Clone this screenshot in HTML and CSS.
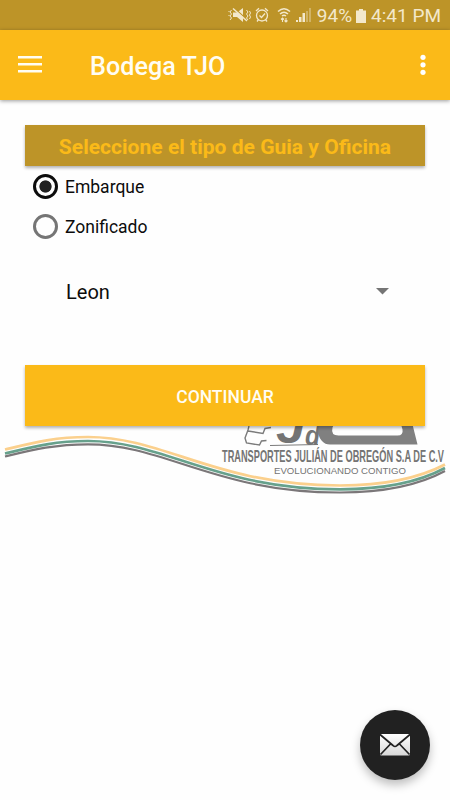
FILE: index.html
```html
<!DOCTYPE html>
<html lang="es">
<head>
<meta charset="utf-8">
<title>Bodega TJO</title>
<link rel="stylesheet" href="styles.css">
</head>
<body>
<div class="status">
  <svg class="status-icons" width="86" height="30" viewBox="0 0 86 30" fill="none" stroke="#f3e8cb" stroke-width="1.3">
    <path d="M5 12.500h4l6-4.500v14l-6-5H5z" fill="#f3e8cb" stroke="none"/>
    <path d="M6 8l14 12.500" stroke="#bd9428" stroke-width="1.500"/>
    <path d="M5 8.500l14 12.500" stroke-width="1.500"/>
    <path d="M3.500 10L2 12l1.500 2L2 16l1.500 2L2 20M1 11v1M1 15v1M18.500 10l1.500 2-1.500 2 1.500 2-1.500 2 1.500 2M21.500 11l1 2-1 2 1 2-1 2" stroke-width="1"/>
    <circle cx="34" cy="15.500" r="5.500"/>
    <path d="M28 11l3-2.700M40 11l-3-2.700M30.500 19.500L29 21.500M37.500 19.500l1.500 2M31.500 15.500l2 2 3.500-4"/>
    <path d="M50 11.500q6-5.500 12 0M52 14q4-3.600 8 0M54 16q2-1.500 4 0" stroke-width="1.500"/>
    <path d="M54.500 22v-4M53 19.500l1.500-1.500 1.500 1.500M58 18v4M56.500 20.500L58 22l1.500-1.500" stroke-width="1.100"/>
    <path d="M68 22v-2h2v2zM71 22v-5h2.500v5zM74.500 22v-9h2.500v9z" fill="#f3e8cb" stroke="none"/>
    <path d="M78 22V11h2v11zM81 22V8h2v14z" fill="#f3e8cb" opacity=".38" stroke="none"/>
  </svg>
  <span class="percent">94%</span>
  <svg class="battery" width="10" height="30" viewBox="0 0 10 30"><path d="M3 8h4v1.500h3V22H0V9.500h3z" fill="#f3e8cb"/></svg>
  <span class="clock">4:41 PM</span>
</div>
<header class="bar">
  <svg class="menu" width="24" height="17" viewBox="0 0 24 17" fill="#fffdf3"><path d="M0 0h24v2.600H0zM0 7h24v2.600H0zM0 14h24v2.600H0z"/></svg>
  <h1>Bodega TJO</h1>
  <svg class="more" width="6" height="22" viewBox="0 0 6 22" fill="#fff"><circle cx="3" cy="3.300" r="2.600"/><circle cx="3" cy="10.800" r="2.600"/><circle cx="3" cy="18.300" r="2.600"/></svg>
</header>
<main>
  <svg class="brand" width="450" height="90" viewBox="0 410 450 90">
    <g fill="none" stroke-width="2.700">
      <path d="M5 449.500C32 443 54 437 88 437C165 437 215 485.500 340 485.500C388 485.500 421 477 445 464.500" stroke="#fbd08d"/>
      <path d="M5 453.500C32 447 54 441 88 441C165 441 215 489.300 340 489.300C388 489.300 421 481 445 468" stroke="#67a18c"/>
      <path d="M5 456.500C32 450 54 444.300 88 444.300C165 444.300 215 492.500 340 492.500C388 492.500 421 484 445 471" stroke="#7b7779" stroke-width="2.200"/>
    </g>
    <path d="M249 426l-1 4-3 8 1.500 5 13 2 2-4 5-.5M248 431l15 2.500 2-5 6-1" fill="none" stroke="#7b7b7b" stroke-width="1.400"/>
    <path d="M270 445.500l48-1" stroke="#7b7b7b" stroke-width="1"/>
    <text class="brand-j" x="276" y="443" textLength="29" lengthAdjust="spacingAndGlyphs">J</text>
    <text class="brand-d" x="305" y="444.500" textLength="15" lengthAdjust="spacingAndGlyphs">d</text>
    <path d="M321 415q-6 19 1 26 3 3.500 8 3.500h87.500l-6-24-13-5 4 14q1 6-5 6h-59q-8 0-6-8l5-12z" fill="#808080"/>
    <text class="brand-name" x="222" y="461.500" textLength="222" lengthAdjust="spacingAndGlyphs">TRANSPORTES JULIÁN DE OBREGÓN S.A DE C.V</text>
    <text class="brand-tag" x="274" y="473.500" textLength="132" lengthAdjust="spacingAndGlyphs">EVOLUCIONANDO CONTIGO</text>
  </svg>
  <h2>Seleccione el tipo de Guia y Oficina</h2>
  <div class="choice"><span class="radio on"></span><span class="label">Embarque</span></div>
  <div class="choice"><span class="radio"></span><span class="label">Zonificado</span></div>
  <div class="select"><span class="label">Leon</span><svg width="13" height="7" viewBox="0 0 13 7"><path d="M0 0h13L6.500 6.500z" fill="#757575"/></svg></div>
  <button>CONTINUAR</button>
</main>
<div class="fab">
  <svg width="32" height="24" viewBox="0 0 32 24">
    <defs><linearGradient id="paper" x2="0" y2="1"><stop stop-color="#fff"/><stop offset="1" stop-color="#d8d8d8"/></linearGradient></defs>
    <rect x="1" y="1" width="30" height="21.500" rx="1.500" fill="url(#paper)"/>
    <path d="M1 1.500L14 12.500q2 2 4 0L31 1.500M1.500 21.500l10-10.500M30.500 21.500l-10-10.500" fill="none" stroke="#212121" stroke-width="1.700"/>
  </svg>
</div>
</body>
</html>
```

FILE: styles.css
```css
* { box-sizing: border-box; }
body {
  margin: 0;
  height: 800px;
  overflow: hidden;
  background: #fefefe;
  font-family: Roboto, "Liberation Sans", sans-serif;
  color: #0c0c0c;
}
.status {
  display: flex;
  align-items: center;
  justify-content: flex-end;
  height: 30px;
  padding-right: 9px;
  background: #bd9428;
  color: #f3e8cb;
  font-size: 19px;
  line-height: 30px;
  white-space: nowrap;
}
.percent, .clock { padding-top: 2px; }
.percent { margin-left: 3px; }
.battery { margin: 1px 5px 0 4px; }
.status-icons { margin-right: 0; }
.clock { font-size: 19px; }
.bar {
  position: relative;
  display: flex;
  align-items: center;
  height: 70px;
  padding: 0 24px 0 18px;
  background: #fbba18;
  box-shadow: 0 1px 4px rgba(0, 0, 0, .4);
}
.menu { margin-top: -1px; }
h1 {
  margin: 3px 0 0 48px;
  font-size: 25.200px;
  line-height: 30px;
  font-weight: 500;
  color: #fffdf3;
}
.more { margin-left: auto; }
main {
  position: relative;
  display: flex;
  flex-direction: column;
  padding: 25px 25px 0;
}
.brand {
  position: absolute;
  left: 0;
  top: 310px;
}
.brand text { font-family: "Liberation Sans", sans-serif; fill: #747474; }
.brand .brand-j { font-size: 44px; font-weight: 700; font-style: italic; }
.brand .brand-d { font-size: 27px; font-weight: 700; font-style: italic; }
.brand .brand-name { font-size: 16.500px; font-weight: 700; }
.brand .brand-tag { font-size: 9.500px; }
h2 {
  height: 41px;
  margin: 0;
  background: #bd9428;
  box-shadow: 0 2px 3px rgba(0, 0, 0, .3);
  color: #fbba18;
  font-size: 21.060px;
  font-weight: 700;
  line-height: 43px;
  text-align: center;
}
.choice {
  display: flex;
  align-items: center;
  gap: 7px;
  height: 40px;
  padding-left: 8px;
  font-size: 17.500px;
}
.label { padding-top: 2px; }
.radio {
  width: 25px;
  height: 25px;
  border: 3px solid #757575;
  border-radius: 50%;
}
.on {
  border-color: #0c0c0c;
  background: radial-gradient(circle, #212121 5.700px, transparent 6.500px);
}
.select {
  display: flex;
  align-items: center;
  justify-content: space-between;
  height: 60px;
  margin-top: 15px;
  padding: 0 36px 0 41px;
  font-size: 20px;
}
button {
  position: relative;
  height: 61px;
  margin-top: 44px;
  padding: 2px 0 0;
  border: 0;
  background: #fbba18;
  box-shadow: 0 2px 3px rgba(0, 0, 0, .3);
  color: #fffdf3;
  font: 500 17.500px Roboto, "Liberation Sans", sans-serif;
}
.fab {
  position: absolute;
  left: 360px;
  top: 710px;
  display: grid;
  place-items: center;
  width: 70px;
  height: 70px;
  border-radius: 50%;
  background: #212121;
  box-shadow: 0 5px 10px rgba(0, 0, 0, .25);
}
```
